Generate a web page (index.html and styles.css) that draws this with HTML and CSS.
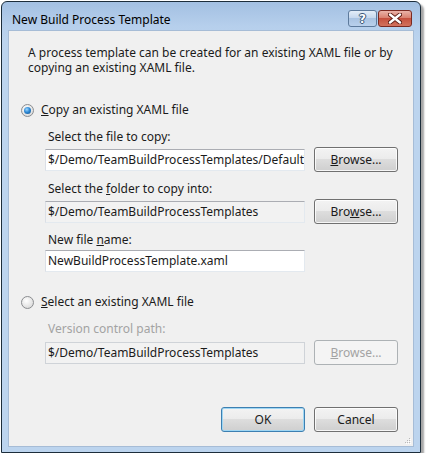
FILE: index.html
```html
<!DOCTYPE html>
<html>
<head>
    <meta charset="UTF-8">
    <title>New Build Process Template</title>
    <link rel="stylesheet" href="styles.css">
</head>
<body>
    <div class="window">
        <div class="titlebar">
            <span class="title">New Build Process Template</span>
            <span class="cap-btn help">?</span>
            <span class="cap-btn close">
                <svg width="14" height="11" viewBox="0 0 14 11">
                    <path d="M2 1.5 L12 9.5 M12 1.5 L2 9.5" stroke="#5a1a12" stroke-width="4.2" stroke-linecap="round"/>
                    <path d="M2 1.5 L12 9.5 M12 1.5 L2 9.5" stroke="#ffffff" stroke-width="2.4" stroke-linecap="round"/>
                </svg>
            </span>
        </div>
        <div class="client">
            <p class="intro">A process template can be created for an existing XAML file or by<br>copying an existing XAML file.</p>

            <div class="option first"><span class="radio checked"></span><span><u>C</u>opy an existing XAML file</span></div>
            <div class="group">
                <div class="field-label">Select the file to copy:</div>
                <div class="field-row">
                    <div class="textbox">$/Demo/TeamBuildProcessTemplates/DefaultTemplate.xaml</div>
                    <button class="btn"><u>B</u>rowse...</button>
                </div>
                <div class="field-label">Select the <u>f</u>older to copy into:</div>
                <div class="field-row">
                    <div class="textbox readonly">$/Demo/TeamBuildProcessTemplates</div>
                    <button class="btn">Bro<u>w</u>se...</button>
                </div>
                <div class="field-label tight">New file <u>n</u>ame:</div>
                <div class="field-row">
                    <div class="textbox">NewBuildProcessTemplate.xaml</div>
                </div>
            </div>

            <div class="option second"><span class="radio"></span><span><u>S</u>elect an existing XAML file</span></div>
            <div class="group disabled">
                <div class="field-label">Version control path:</div>
                <div class="field-row low">
                    <div class="textbox readonly">$/Demo/TeamBuildProcessTemplates</div>
                    <button class="btn" disabled><u>B</u>rowse...</button>
                </div>
            </div>

            <div class="footer">
                <button class="btn default">OK</button>
                <button class="btn">Cancel</button>
            </div>
            <svg class="grip" width="7" height="7" viewBox="0 0 7 7">
                <rect x="5" y="0" width="1" height="1" fill="#b8b8b8"/>
                <rect x="3" y="2" width="1" height="1" fill="#b8b8b8"/>
                <rect x="5" y="2" width="1" height="1" fill="#b8b8b8"/>
                <rect x="1" y="4" width="1" height="1" fill="#b8b8b8"/>
                <rect x="3" y="4" width="1" height="1" fill="#b8b8b8"/>
                <rect x="5" y="4" width="1" height="1" fill="#b8b8b8"/>
                <rect x="6" y="1" width="1" height="1" fill="#ffffff"/>
                <rect x="4" y="3" width="1" height="1" fill="#ffffff"/>
                <rect x="6" y="3" width="1" height="1" fill="#ffffff"/>
                <rect x="2" y="5" width="1" height="1" fill="#ffffff"/>
                <rect x="4" y="5" width="1" height="1" fill="#ffffff"/>
                <rect x="6" y="5" width="1" height="1" fill="#ffffff"/>
            </svg>
        </div>
    </div>
</body>
</html>
```

FILE: styles.css
```css
body {
    margin: 0;
    background-color: #ffffff;
    font-family: "Noto Sans", "Open Sans", sans-serif;
    font-size: 12px;
    color: #1b1b1b;
}

/* window frame */
.window {
    box-sizing: border-box;
    width: 420px;
    height: 452px;
    margin: 1px 0 0 1px;
    padding: 0 6px 5px;
    border: 1px solid #1c2d3b;
    border-radius: 6px 6px 0 0;
    background: linear-gradient(to bottom, #a3c0e2 0, #b6cfec 24px, #bcd4ee 40px, #bcd4ee 100%);
    box-shadow: 3px 3px 2px rgba(0, 0, 0, 0.35);
    display: flex;
    flex-direction: column;
}
.titlebar {
    height: 28px;
    display: flex;
    align-items: flex-start;
    padding-left: 4px;
}
.title {
    flex: 1;
    padding-top: 10px;
    line-height: 16px;
    font-size: 12px;
    color: #000000;
}
.cap-btn {
    box-sizing: border-box;
    margin-top: 8px;
    height: 17px;
    border-radius: 3px;
    display: flex;
    align-items: center;
    justify-content: center;
}
.help {
    width: 29px;
    margin-right: 1px;
    border: 1px solid #5d7a9c;
    background: linear-gradient(to bottom, #e3edf8 0, #c6d8ee 45%, #a9c3e2 50%, #b9d0ec 100%);
    color: #ffffff;
    font-family: "DejaVu Sans", sans-serif;
    font-weight: bold;
    font-size: 12px;
    text-shadow: 0 0 1px #2f4a6a, 1px 0 0 #3d5a7c, -1px 0 0 #3d5a7c, 0 1px 0 #3d5a7c, 0 -1px 0 #3d5a7c;
}
.close {
    width: 34px;
    margin-right: 2px;
    border: 1px solid #7a2a22;
    background: linear-gradient(to bottom, #eab3a8 0, #d98170 45%, #c5503e 50%, #d2725e 100%);
}

/* client area */
.client {
    position: relative;
    flex: 1;
    box-sizing: border-box;
    border: 1px solid #a6bcd6;
    background-color: #f0f0f0;
    display: flex;
    flex-direction: column;
    padding: 0 15px 14px 0;
}
.intro {
    margin: 14px 0 0 19px;
    line-height: 15px;
}
.option {
    display: flex;
    align-items: center;
    height: 16px;
    line-height: 16px;
    padding-left: 12px;
}
.option.first {
    margin-top: 27px;
}
.option.second {
    margin-top: 22px;
}
.radio {
    box-sizing: border-box;
    width: 13px;
    height: 13px;
    margin-right: 7px;
    border: 1px solid #8b8d90;
    border-radius: 50%;
    background: radial-gradient(circle at 40% 35%, #ffffff 0, #e6e6e6 55%, #cfcfcf 100%);
    display: flex;
    align-items: center;
    justify-content: center;
}
.radio.checked::after {
    content: "";
    width: 7px;
    height: 7px;
    border-radius: 50%;
    background: radial-gradient(circle at 40% 35%, #9fd8ff 0, #2f8ad6 45%, #124d86 100%);
}
.group {
    padding-left: 36px;
}
.field-label {
    margin-top: 11px;
    padding-left: 3px;
    line-height: 15px;
}
.field-label.tight {
    margin-top: 8px;
}
.group .field-row ~ .field-label {
    margin-top: 9px;
}
.group .field-row ~ .field-label.tight {
    margin-top: 8px;
}
.field-row {
    display: flex;
    align-items: center;
    gap: 9px;
    margin-top: 3px;
    min-height: 22px;
}
.field-row.low {
    margin-top: 4px;
}
.textbox {
    box-sizing: border-box;
    width: 260px;
    height: 22px;
    padding: 0 2px;
    line-height: 20px;
    border: 1px solid #dbdfe6;
    border-top-color: #abadb3;
    border-bottom-color: #e3e9ef;
    border-right-color: #e3e9ef;
    background-color: #ffffff;
    white-space: nowrap;
    overflow: hidden;
}
.textbox.readonly {
    background-color: #f2f2f2;
}
.disabled {
    color: #a3a3a3;
}
.disabled .textbox {
    color: #1b1b1b;
    border-color: #cfd3d8;
}

/* push buttons */
.btn {
    box-sizing: border-box;
    width: 84px;
    height: 25px;
    padding: 0;
    border: 1px solid #707070;
    border-radius: 3px;
    background: linear-gradient(to bottom, #f3f3f3 0, #ebebeb 50%, #dddddd 50%, #cfcfcf 100%);
    box-shadow: inset 0 0 0 1px rgba(255, 255, 255, 0.8);
    font-family: "Noto Sans", "Open Sans", sans-serif;
    font-size: 12px;
    color: #1b1b1b;
}
.btn:disabled {
    border-color: #adb2b5;
    background: #f4f4f4;
    box-shadow: none;
    color: #a3a3a3;
}
.btn.default {
    border-color: #3c7fb1;
    box-shadow: inset 0 0 0 1px #9fd6f3;
}
.footer {
    margin-top: auto;
    display: flex;
    justify-content: flex-end;
    gap: 9px;
}
.grip {
    position: absolute;
    right: 2px;
    bottom: 1px;
}
```
